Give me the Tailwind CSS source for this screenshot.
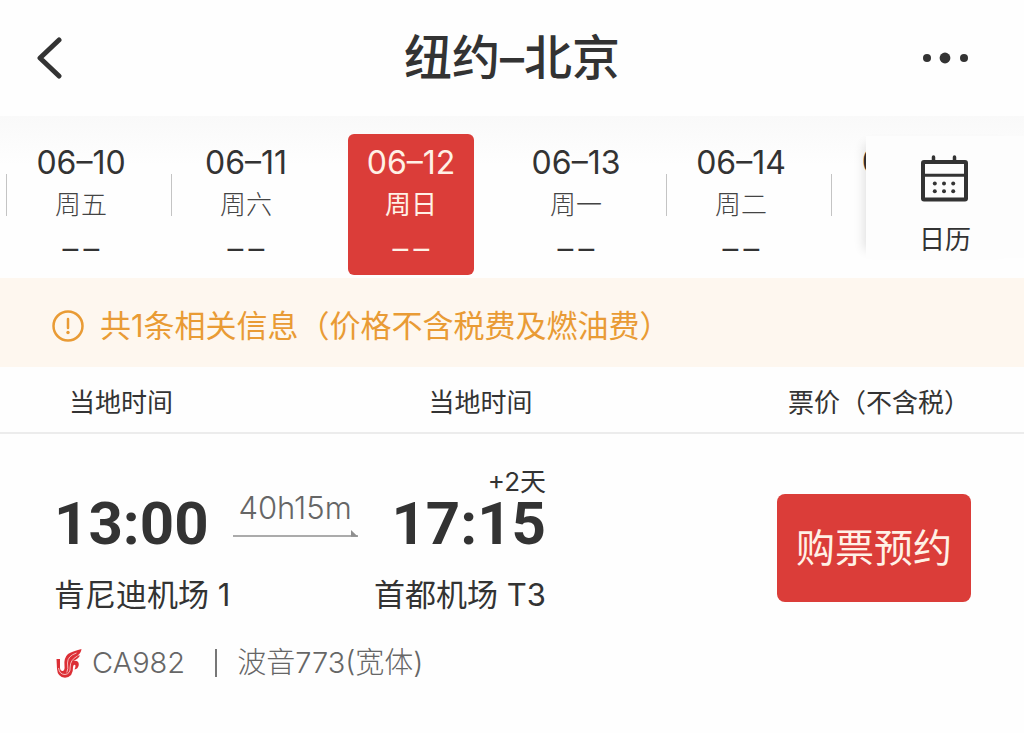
<!DOCTYPE html>
<html lang="zh-CN">

<head>
    <meta charset="UTF-8">
    <meta name="viewport" content="width=device-width, initial-scale=1">
    <title>纽约–北京</title>
    <script src="https://cdn.jsdelivr.net/npm/@tailwindcss/browser@4"></script>
</head>

<body class="min-h-screen bg-[#fefefe] font-['Inter','Noto_Sans_CJK_SC',sans-serif] text-[#333333]">
    <!-- Top bar -->
    <header class="flex h-[116px] items-center pr-[54px] pl-9">
        <button type="button" aria-label="返回" class="w-[66px] cursor-pointer">
            <svg class="h-[42px] w-[26px]" viewBox="0 0 26 42" fill="none" stroke="#333333" stroke-width="5" stroke-linecap="round" stroke-linejoin="round">
                <path d="M23 3 L4 21 L23 39" />
            </svg>
        </button>
        <h1 class="flex-1 text-center text-[48px] leading-[60px] font-medium">纽约–北京</h1>
        <button type="button" aria-label="更多" class="w-12 cursor-pointer">
            <svg class="h-3 w-12" viewBox="0 0 48 12" fill="#333333">
                <circle cx="5" cy="6" r="4" />
                <circle cx="23" cy="6" r="5.4" />
                <circle cx="42" cy="6" r="4" />
            </svg>
        </button>
    </header>

    <!-- Dates -->
    <nav class="flex bg-linear-to-b from-[#f9f9f9] to-[#fefefe] to-30%">
        <div class="flex min-w-0 flex-1 overflow-hidden pt-[18px] pb-[3px] pl-[6px]">
            <div class="flex w-[165px] shrink-0">
                <span class="mt-10 h-[42px] w-px bg-[#c4c4c4]"></span>
                <button type="button" class="ml-[11px] w-[126px] cursor-pointer rounded-md pt-2 pb-[2px]">
                    <span class="block text-[32px] leading-10">06–10</span>
                    <span class="block text-[26px] leading-[44px] font-light text-[#444444]">周五</span>
                    <span class="block font-['Roboto'] text-[32px] leading-[46px]">––</span>
                </button>
            </div>
            <div class="flex w-[165px] shrink-0">
                <span class="mt-10 h-[42px] w-px bg-[#c4c4c4]"></span>
                <button type="button" class="ml-[11px] w-[126px] cursor-pointer rounded-md pt-2 pb-[2px]">
                    <span class="block text-[32px] leading-10">06–11</span>
                    <span class="block text-[26px] leading-[44px] font-light text-[#444444]">周六</span>
                    <span class="block font-['Roboto'] text-[32px] leading-[46px]">––</span>
                </button>
            </div>
            <div class="flex w-[165px] shrink-0">
                <span class="w-px"></span>
                <button type="button" aria-pressed="true" class="ml-[11px] w-[126px] cursor-pointer rounded-md bg-[#db3d39] pt-2 pb-[2px] text-[#fff1e6]">
                    <span class="block text-[32px] leading-10">06–12</span>
                    <span class="block text-[26px] leading-[44px]">周日</span>
                    <span class="block font-['Roboto'] text-[32px] leading-[46px]">––</span>
                </button>
            </div>
            <div class="flex w-[165px] shrink-0">
                <span class="w-px"></span>
                <button type="button" class="ml-[11px] w-[126px] cursor-pointer rounded-md pt-2 pb-[2px]">
                    <span class="block text-[32px] leading-10">06–13</span>
                    <span class="block text-[26px] leading-[44px] font-light text-[#444444]">周一</span>
                    <span class="block font-['Roboto'] text-[32px] leading-[46px]">––</span>
                </button>
            </div>
            <div class="flex w-[165px] shrink-0">
                <span class="mt-10 h-[42px] w-px bg-[#c4c4c4]"></span>
                <button type="button" class="ml-[11px] w-[126px] cursor-pointer rounded-md pt-2 pb-[2px]">
                    <span class="block text-[32px] leading-10">06–14</span>
                    <span class="block text-[26px] leading-[44px] font-light text-[#444444]">周二</span>
                    <span class="block font-['Roboto'] text-[32px] leading-[46px]">––</span>
                </button>
            </div>
            <div class="flex w-[165px] shrink-0 items-start">
                <span class="mt-10 h-[42px] w-px bg-[#c4c4c4]"></span>
                <button type="button" class="ml-[11px] w-[126px] cursor-pointer rounded-md pt-2 pb-[2px]">
                    <span class="block text-[32px] leading-10">06–15</span>
                </button>
            </div>
        </div>
        <div class="flex w-[158px] shrink-0 py-5">
            <button type="button" class="flex w-full cursor-pointer flex-col items-center gap-5 bg-[#fdfdfd] pt-[18px] shadow-[-10px_0_10px_-8px_rgba(0,0,0,0.12)]">
                <svg class="h-12 w-12" viewBox="0 0 48 48" fill="none" stroke="#333333" stroke-width="4">
                    <rect x="2" y="8" width="43" height="37.500" rx="1" />
                    <path d="M2 21.200H45" stroke-width="3" />
                    <path d="M12.500 8V3M33.500 8V3" stroke-width="3.500" stroke-linecap="round" />
                    <g fill="#333333" stroke="none">
                        <circle cx="13.800" cy="29.500" r="2" />
                        <circle cx="23" cy="29.500" r="2" />
                        <circle cx="32.200" cy="29.500" r="2" />
                        <circle cx="13.800" cy="37.300" r="2" />
                        <circle cx="23" cy="37.300" r="2" />
                        <circle cx="32.200" cy="37.300" r="2" />
                    </g>
                </svg>
                <span class="text-[26px] leading-9">日历</span>
            </button>
        </div>
    </nav>

    <main>
        <!-- Notice -->
        <div class="flex h-[89px] items-center gap-4 bg-[#fef7ef] pt-[6px] pl-[52px] text-[#e99b35]">
            <svg class="h-8 w-8 shrink-0" viewBox="0 0 32 32" fill="none" stroke="#e99b35" stroke-width="2.500">
                <circle cx="16" cy="16" r="14.500" />
                <path d="M16 9V18" stroke-linecap="round" />
                <circle cx="16" cy="22.500" r="1.700" fill="#e99b35" stroke="none" />
            </svg>
            <p class="text-[31px] leading-10 whitespace-nowrap">共1条相关信息（价格不含税费及燃油费）</p>
        </div>

        <!-- Column titles -->
        <div class="flex h-[67px] items-center justify-between border-b-2 border-[#ececec] pt-[6px] pr-[54px] pl-[69px] text-[26px]">
            <span>当地时间</span>
            <span>当地时间</span>
            <span>票价（不含税）</span>
        </div>

        <!-- Flight -->
        <article class="flex items-start justify-between pt-8 pr-[53px] pl-[54px]">
            <div class="w-[492px]">
                <div class="flex items-end gap-6">
                    <time class="font-['Roboto'] text-[60px] leading-[52px] font-bold">13:00</time>
                    <div class="pb-3">
                        <span class="block text-center text-[31px] leading-10 font-light text-[#666666]">40h15m</span>
                        <svg class="h-[10px] w-[125px]" viewBox="0 0 125 10">
                            <path d="M0 8H125" stroke="#8f8f8f" stroke-width="1.500" />
                            <path d="M118 2L125 8.700H118Z" fill="#8f8f8f" />
                        </svg>
                    </div>
                    <div class="ml-auto text-right">
                        <span class="block text-[26px] leading-8">+2天</span>
                        <time class="block font-['Roboto'] text-[60px] leading-[52px] font-bold">17:15</time>
                    </div>
                </div>
                <div class="mt-[25px] flex justify-between text-[31px] leading-10">
                    <span>肯尼迪机场 1</span>
                    <span>首都机场 T3</span>
                </div>
                <div class="mt-7 flex items-center pl-[2px] text-[29px] leading-10 font-light text-[#666666]">
                    <svg class="h-[29px] w-[26px]" viewBox="0 0 26 29">
                        <path fill="#dc2f36" d="M.5 10H4V19Q4.500 22.500 7 22Q9 21 8.500 17Q7.500 9 12 5Q16 2.500 25.500 0Q25 4 21.500 6.500L24 6.500Q22 10 17 12Q23 11 22.800 16Q22 20 18.500 20.500Q20 18 19.300 16Q17.500 15 17 18Q17.500 28 9 28.700Q1.500 28 1 20Z" />
                        <g fill="none" stroke="#f9c9c9" stroke-width="0.900">
                            <path d="M2.500 19Q3.500 25.500 9 25.500Q14.500 25 14.200 18Q14 11 21.500 7" />
                            <path d="M10.800 23.500Q12.500 20 11.500 14Q11.500 7 20.500 4" />
                        </g>
                    </svg>
                    <span class="ml-[10px]">CA982</span>
                    <span class="mr-5 ml-[30px] h-7 w-[2px] bg-[#777777]"></span>
                    <span>波音773(宽体)</span>
                </div>
            </div>
            <button type="button" class="mt-7 h-[108px] w-[194px] cursor-pointer rounded-lg bg-[#db3d39] text-[39px] text-[#fff1e6]">购票预约</button>
        </article>
    </main>
</body>

</html>
